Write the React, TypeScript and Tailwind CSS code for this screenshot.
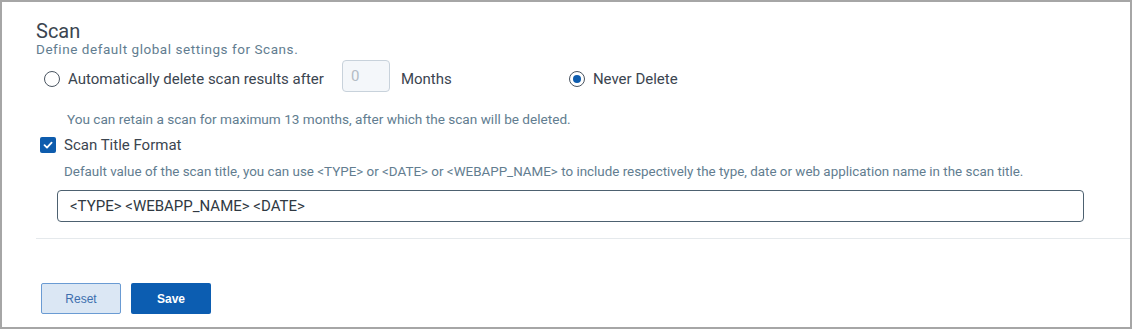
export default function App() {
  return (
    <div className="w-[1132px] h-[329px] border-2 border-[#a6a6a6] bg-white font-['Roboto',sans-serif] text-[#3b4550] overflow-hidden">
      {/* Header */}
      <div className="pl-[34px] pt-[19px]">
        <h2 className="text-[20px] leading-[20px] font-normal text-[#3b4550]">Scan</h2>
        <p className="text-[13.5px] leading-[16px] tracking-[0.55px] text-[#627d90]">Define default global settings for Scans.</p>
      </div>

      {/* Retention row */}
      <div className="pl-[42px] mt-[3px] flex items-start">
        <label className="flex items-center gap-[8px] pt-[9px] text-[15px] leading-[20px]">
          <span className="w-[16px] h-[16px] rounded-full border-[1.5px] border-[#4a5561] bg-white" />
          <span>Automatically delete scan results after</span>
        </label>
        <div className="ml-[18px] w-[48px] h-[32px] rounded-[4px] border border-[#c8d2db] bg-[#f4f7fa] pl-[8px] pt-[5px] text-[15px] leading-[20px] text-[#b3bcc5]">
          0
        </div>
        <span className="ml-[11px] w-[168px] pt-[9px] text-[15px] leading-[20px]">Months</span>
        <label className="flex items-center gap-[8px] pt-[9px] text-[15px] leading-[20px]">
          <span className="w-[16px] h-[16px] rounded-full border-[1.5px] border-[#4a5561] bg-white flex items-center justify-center">
            <span className="w-[8px] h-[8px] rounded-full bg-[#0e5cad]" />
          </span>
          <span>Never Delete</span>
        </label>
      </div>

      <p className="ml-[65px] mt-[19px] text-[13.6px] leading-[16px] text-[#627d90]">
        You can retain a scan for maximum 13 months, after which the scan will be deleted.
      </p>

      {/* Title format */}
      <label className="ml-[38px] mt-[8px] flex items-center gap-[8px] text-[15px] leading-[20px]">
        <span className="w-[16px] h-[16px] rounded-[2px] bg-[#0e5cad] flex items-center justify-center">
          <svg width="10" height="10" viewBox="0 0 10 10" fill="none">
            <path d="M1.5 5.2 L4 7.6 L8.6 2.6" stroke="white" strokeWidth="1.8" strokeLinecap="round" strokeLinejoin="round" />
          </svg>
        </span>
        <span>Scan Title Format</span>
      </label>

      <p className="ml-[62px] mt-[9px] text-[13.4px] leading-[16px] text-[#627d90]">
        Default value of the scan title, you can use &lt;TYPE&gt; or &lt;DATE&gt; or &lt;WEBAPP_NAME&gt; to include respectively the type, date or web application name in the scan title.
      </p>

      <div className="ml-[55px] mt-[10px] w-[1027px] h-[32px] rounded-[4px] border border-[#4d6170] flex items-center pl-[12px] text-[15px] text-[#2f3942]">
        &lt;TYPE&gt; &lt;WEBAPP_NAME&gt; &lt;DATE&gt;
      </div>

      <div className="ml-[34px] mt-[16px] h-px bg-[#e5e9ec]" />

      {/* Actions */}
      <div className="ml-[39px] mt-[44px] flex gap-[10px] font-['Liberation_Sans',sans-serif] text-[12px]">
        <button className="w-[80px] h-[31px] rounded-[2px] border border-[#6a9bd3] bg-[#dbe7f4] text-[#3d6fae]">
          Reset
        </button>
        <button className="w-[80px] h-[31px] rounded-[2px] bg-[#0c5db1] text-white font-bold">
          Save
        </button>
      </div>
    </div>
  );
}
